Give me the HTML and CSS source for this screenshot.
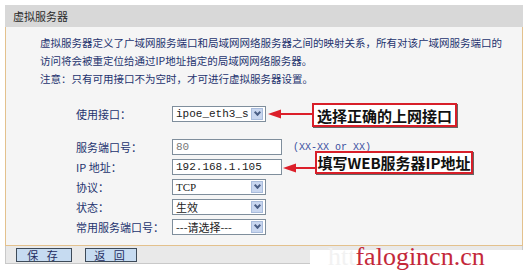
FILE: index.html
```html
<!DOCTYPE html>
<html lang="zh-CN">
<head>
  <meta charset="UTF-8">
  <title>虚拟服务器</title>
  <link rel="stylesheet" href="styles.css">
</head>
<body>
  <div class="panel">
    <div class="panel-head">虚拟服务器</div>
    <div class="panel-body">
      <p class="desc">虚拟服务器定义了广域网服务端口和局域网网络服务器之间的映射关系，所有对该广域网服务端口的<br>访问将会被重定位给通过IP地址指定的局域网网络服务器。</p>
      <p class="desc">注意：只有可用接口不为空时，才可进行虚拟服务器设置。</p>

      <div class="form">
        <div class="row row-first">
          <label>使用接口：</label>
          <div class="select"><span class="mono">ipoe_eth3_s</span><i class="drop"></i></div>
        </div>
        <div class="row">
          <label>服务端口号：</label>
          <div class="input"><span class="mono gray">80</span></div>
          <span class="hint">(XX-XX or XX)</span>
        </div>
        <div class="row">
          <label>IP 地址：</label>
          <div class="input"><span class="mono">192.168.1.105</span></div>
        </div>
        <div class="row">
          <label>协议：</label>
          <div class="select"><span class="serif">TCP</span><i class="drop"></i></div>
        </div>
        <div class="row">
          <label>状态：</label>
          <div class="select"><span>生效</span><i class="drop"></i></div>
        </div>
        <div class="row">
          <label>常用服务端口号：</label>
          <div class="select"><span>---请选择---</span><i class="drop"></i></div>
        </div>
      </div>
    </div>
    <div class="panel-foot">
      <button class="btn btn-save">保 存</button>
      <button class="btn btn-back">返 回</button>
    </div>
  </div>

  <!-- annotations drawn over the screenshot -->
  <svg class="arrows" width="531" height="273">
    <line x1="278" y1="114" x2="312" y2="114" stroke="#dc1f2a" stroke-width="2"/>
    <polygon points="268,114 281,109.5 281,118.5" fill="#dc1f2a"/>
    <line x1="293" y1="168" x2="315" y2="168" stroke="#dc1f2a" stroke-width="2"/>
    <polygon points="283,168 296,163.5 296,172.5" fill="#dc1f2a"/>
  </svg>
  <div class="callout callout-1">选择正确的上网接口</div>
  <div class="callout callout-2">填写WEB服务器IP地址</div>

  <div class="watermark"><span class="wm-faint">htt</span>falogincn.cn</div>
</body>
</html>
```

FILE: styles.css
```css
body {
  margin: 0;
  padding: 0;
  background-color: #fff;
  font-family: "Noto Sans CJK SC", "Liberation Sans", sans-serif;
  font-size: 11px;
  color: #24336e;
  width: 531px;
  height: 273px;
  overflow: hidden;
  position: relative;
}
.panel {
  width: 518px;
  margin: 5px 0 0 5px;
}
.panel-head {
  height: 22px;
  line-height: 22px;
  padding-left: 8px;
  background-color: #d8d8d8;
  color: #2b2b2b;
}
.panel-body {
  background-color: #f5f5f5;
  border: 1px solid #e3c18d;
  border-top: none;
  padding: 7px 0 8px 34px;
}
.desc {
  margin: 0;
  line-height: 18px;
  font-size: 10.5px;
  white-space: nowrap;
}
.form {
  margin-top: 16px;
  margin-left: 36px;
}
.row {
  display: flex;
  align-items: center;
  height: 20px;
}
.row-first {
  margin-bottom: 13px;
}
.row label {
  width: 96px;
}
.select, .input {
  box-sizing: border-box;
  height: 16px;
  background-color: #fff;
  border: 1px solid #7f8e9c;
  display: flex;
  align-items: center;
  padding-left: 3px;
  color: #222;
}
.select {
  width: 94px;
  justify-content: space-between;
  padding-right: 2px;
}
.input {
  width: 110px;
}
.drop {
  display: block;
  box-sizing: border-box;
  width: 12px;
  height: 12px;
  background-color: #c8d6ef;
  border: 1px solid #a9bcdc;
  position: relative;
}
.drop::after {
  content: "";
  position: absolute;
  left: 3px;
  top: 1px;
  width: 3px;
  height: 3px;
  border-right: 2px solid #4b5f86;
  border-bottom: 2px solid #4b5f86;
  transform: rotate(45deg);
}
.mono {
  font-family: "Liberation Mono", monospace;
  font-size: 11px;
}
.serif {
  font-family: "Liberation Serif", serif;
  font-size: 11px;
}
.gray {
  color: #777;
}
.hint {
  margin-left: 11px;
  font-family: "Liberation Mono", monospace;
  font-size: 10px;
  color: #3b4fa0;
}
.panel-foot {
  box-sizing: border-box;
  height: 18px;
  background-color: #e9e9e9;
  border: 1px solid #c9c9c9;
  border-top: none;
  padding: 2px 0 0 10px;
  display: flex;
  gap: 13px;
  align-items: flex-start;
}
.btn {
  height: 14px;
  padding: 0;
  background-color: #c6dbf1;
  border: 1px solid #3d4a58;
  font-family: "Noto Sans CJK SC", sans-serif;
  font-size: 11px;
  line-height: 12px;
  letter-spacing: 3px;
  color: #1e2c60;
}
.btn-save {
  width: 56px;
}
.btn-back {
  width: 52px;
}
.arrows {
  position: absolute;
  left: 0;
  top: 0;
  pointer-events: none;
}
.callout {
  position: absolute;
  box-sizing: border-box;
  background-color: #fff;
  border: 2px solid #d81f29;
  box-shadow: 1px 1px 0 #666;
  font-weight: bold;
  font-size: 15px;
  color: #111;
  display: flex;
  align-items: center;
  justify-content: center;
}
.callout-1 {
  left: 312px;
  top: 103px;
  width: 145px;
  height: 24px;
}
.callout-2 {
  left: 315px;
  top: 151px;
  width: 158px;
  height: 23px;
}
.watermark {
  position: absolute;
  left: 310px;
  top: 250px;
  width: 221px;
  height: 23px;
  background-color: #fff;
  padding-left: 18px;
  box-sizing: border-box;
  font-family: "Liberation Serif", serif;
  font-size: 26px;
  line-height: 13px;
  color: #c4283a;
  white-space: nowrap;
}
.wm-faint {
  color: #f2f2f2;
}
```
